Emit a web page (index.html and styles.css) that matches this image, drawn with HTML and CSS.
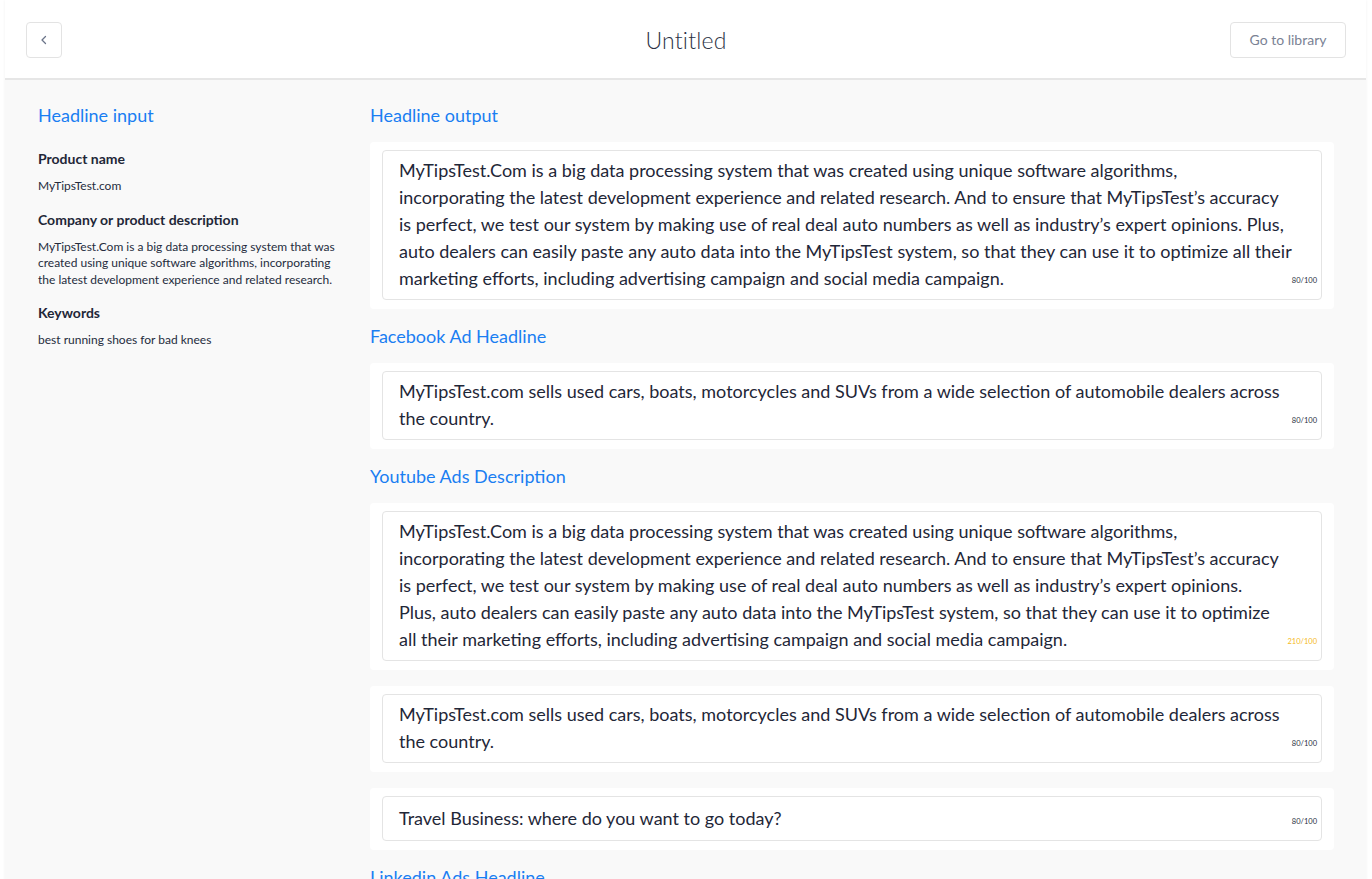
FILE: index.html
```html
<!DOCTYPE html>
<html>
<head>
<meta charset="utf-8">
<title>Untitled</title>
<link rel="stylesheet" href="styles.css">
</head>
<body>
<div class="app">
  <header class="topbar">
    <div class="bar-left">
      <button class="back-btn" aria-label="Back">
        <svg width="12" height="12" viewBox="0 0 12 12"><path d="M7.5 2.5 L4 6 L7.5 9.5" fill="none" stroke="#6b7489" stroke-width="1.3" stroke-linecap="round" stroke-linejoin="round"/></svg>
      </button>
    </div>
    <h1 class="title">Untitled</h1>
    <div class="bar-right">
      <button class="lib-btn">Go to library</button>
    </div>
  </header>
  <main class="content">
    <aside class="input-col">
      <h2 class="section-title">Headline input</h2>
      <div class="field">
        <div class="field-label">Product name</div>
        <div class="field-value">MyTipsTest.com</div>
      </div>
      <div class="field">
        <div class="field-label">Company or product description</div>
        <div class="field-value">MyTipsTest.Com is a big data processing system that was<br>created using unique software algorithms, incorporating<br>the latest development experience and related research.</div>
      </div>
      <div class="field">
        <div class="field-label">Keywords</div>
        <div class="field-value">best running shoes for bad knees</div>
      </div>
    </aside>
    <section class="output-col">
      <h2 class="section-title">Headline output</h2>
      <div class="card">
        <div class="box">
          <p class="box-text">MyTipsTest.Com is a big data processing system that was created using unique software algorithms,<br>incorporating the latest development experience and related research. And to ensure that MyTipsTest’s accuracy<br>is perfect, we test our system by making use of real deal auto numbers as well as industry’s expert opinions. Plus,<br>auto dealers can easily paste any auto data into the MyTipsTest system, so that they can use it to optimize all their<br>marketing efforts, including advertising campaign and social media campaign.</p>
          <span class="count">80/100</span>
        </div>
      </div>

      <h2 class="section-title">Facebook Ad Headline</h2>
      <div class="card">
        <div class="box">
          <p class="box-text">MyTipsTest.com sells used cars, boats, motorcycles and SUVs from a wide selection of automobile dealers across<br>the country.</p>
          <span class="count">80/100</span>
        </div>
      </div>

      <h2 class="section-title">Youtube Ads Description</h2>
      <div class="card">
        <div class="box">
          <p class="box-text">MyTipsTest.Com is a big data processing system that was created using unique software algorithms,<br>incorporating the latest development experience and related research. And to ensure that MyTipsTest’s accuracy<br>is perfect, we test our system by making use of real deal auto numbers as well as industry’s expert opinions.<br>Plus, auto dealers can easily paste any auto data into the MyTipsTest system, so that they can use it to optimize<br>all their marketing efforts, including advertising campaign and social media campaign.</p>
          <span class="count over">210/100</span>
        </div>
      </div>
      <div class="card card-gap">
        <div class="box">
          <p class="box-text">MyTipsTest.com sells used cars, boats, motorcycles and SUVs from a wide selection of automobile dealers across<br>the country.</p>
          <span class="count">80/100</span>
        </div>
      </div>
      <div class="card card-gap">
        <div class="box">
          <p class="box-text">Travel Business: where do you want to go today?</p>
          <span class="count">80/100</span>
        </div>
      </div>

      <h2 class="section-title">Linkedin Ads Headline</h2>
    </section>
  </main>
</div>
</body>
</html>
```

FILE: styles.css
```css
* { box-sizing: border-box; }
html, body { margin: 0; padding: 0; background: #ffffff; }
body {
  font-family: "Lato", "Open Sans", sans-serif;
  color: #1f2738;
  height: 879px;
  overflow: hidden;
}
.app {
  margin: 0 6px 0 5px;
  background: #f9f9f9;
  min-height: 879px;
  box-shadow: 0 0 3px rgba(0,0,0,0.06);
}
.topbar {
  height: 80px;
  background: #ffffff;
  border-bottom: 2px solid #e6e6e6;
  display: grid;
  grid-template-columns: 1fr auto 1fr;
  align-items: center;
  padding: 0 20px 1px 21px;
}
.bar-left { display: flex; justify-content: flex-start; }
.bar-right { display: flex; justify-content: flex-end; }
.back-btn {
  width: 36px;
  height: 36px;
  border: 1px solid #e3e3e3;
  border-radius: 4px;
  background: #fff;
  display: flex;
  align-items: center;
  justify-content: center;
  padding: 0;
  margin-top: 2px;
}
.title {
  margin: 0;
  font-size: 23px;
  font-weight: 300;
  color: #2b3245;
  letter-spacing: 0.2px;
  margin-top: 2px;
}
.lib-btn {
  width: 116px;
  height: 36px;
  border: 1px solid #e3e3e3;
  border-radius: 4px;
  background: #fff;
  font-family: inherit;
  font-size: 14px;
  color: #7a8294;
  padding: 0;
  margin-top: 2px;
}
.content {
  display: flex;
  padding: 0 32px 0 33px;
}
.input-col {
  width: 332px;
  flex: none;
  padding-top: 22px;
}
.output-col {
  flex: 1;
  padding-top: 22px;
}
.section-title {
  margin: 0;
  font-size: 18px;
  line-height: 26px;
  font-weight: 400;
  color: #1a7ef2;
  height: 40px;
}
.input-col .section-title { margin-bottom: 8px; }
.field { margin-bottom: 16px; }
.field-label {
  font-size: 14px;
  font-weight: 700;
  color: #1f2738;
  line-height: 18px;
  margin-bottom: 10px;
}
.field-value {
  font-size: 12px;
  line-height: 16.5px;
  color: #252c3d;
}
.card {
  background: #ffffff;
  border-radius: 4px;
  padding: 8px 12px 9px;
  margin-bottom: 14px;
}
.card + .card-gap { margin-top: 16px; }
.box {
  border: 1px solid #e4e4e4;
  border-radius: 4px;
  padding: 6px 16px 7px;
  min-height: 45px;
  display: flex;
  align-items: center;
  position: relative;
}
.box-text {
  margin: 0;
  font-size: 18px;
  line-height: 27px;
  color: #1f2738;
  white-space: nowrap;
}
.count {
  position: absolute;
  right: 4px;
  bottom: 14px;
  font-size: 7.5px;
  line-height: 8px;
  color: #2a3142;
}
.count.over { color: #f5b921; }
```
